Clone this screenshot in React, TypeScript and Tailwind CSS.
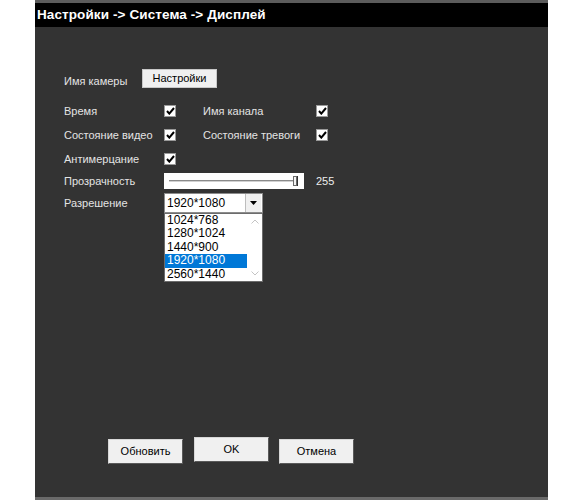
import React from 'react';

const font = { fontFamily: '"Liberation Sans", Arial, sans-serif' };

function Check() {
  return (
    <span className="w-[12px] h-[12px] bg-white border border-[#9a9a9a] flex items-center justify-center shrink-0">
      <svg width="9" height="8" viewBox="0 0 9 8">
        <path d="M1 4 L3.3 6.6 L8 1" stroke="#000" strokeWidth="2" fill="none" />
      </svg>
    </span>
  );
}

function Btn({ label, className = '' }: { label: string; className?: string }) {
  return (
    <button
      className={`w-[75px] h-[25px] bg-[#f0f0f0] text-black text-[11px] border border-t-[#d8d8d8] border-l-[#d8d8d8] border-r-[#5a5a5a] border-b-[#5a5a5a] ${className}`}
    >
      {label}
    </button>
  );
}

const options = ['1024*768', '1280*1024', '1440*900', '1920*1080', '2560*1440'];

export default function App() {
  return (
    <div className="w-[583px] h-[500px] bg-white overflow-hidden" style={font}>
      <div className="ml-[35px] w-[513px] h-[500px] flex flex-col bg-[#333333]">
        <div className="h-[3px] bg-[#5c5c5c]" />
        <div className="h-[24px] bg-black flex items-center pl-[2px]">
          <span className="text-white font-bold text-[13.5px] leading-none tracking-[0.1px]">
            Настройки -&gt; Система -&gt; Дисплей
          </span>
        </div>

        <div className="flex-1 flex flex-col pl-[29px] text-[11px] text-[#e4e4e4]">
          {/* Имя камеры */}
          <div className="mt-[42px] flex items-end h-[19px]">
            <span className="w-[78px] leading-[14px]">Имя камеры</span>
            <button className="w-[75px] h-[19px] bg-[#f0f0f0] text-black text-[11px] border border-[#c8c8c8]">
              Настройки
            </button>
          </div>

          {/* чекбоксы */}
          <div className="mt-[11px] flex items-center h-[24px]">
            <span className="w-[100px]">Время</span>
            <Check />
            <span className="ml-[27px] w-[113px]">Имя канала</span>
            <Check />
          </div>
          <div className="flex items-center h-[24px]">
            <span className="w-[100px]">Состояние видео</span>
            <Check />
            <span className="ml-[27px] w-[113px]">Состояние тревоги</span>
            <Check />
          </div>
          <div className="flex items-center h-[24px]">
            <span className="w-[100px]">Антимерцание</span>
            <Check />
          </div>

          {/* Прозрачность */}
          <div className="mt-[2px] flex items-center h-[16px]">
            <span className="w-[100px]">Прозрачность</span>
            <div className="w-[140px] h-[16px] bg-white flex items-center px-[5px]">
              <svg width="130" height="12" viewBox="0 0 130 12">
                <line x1="0" y1="5.5" x2="127" y2="5.5" stroke="#8a8a8a" strokeWidth="1" />
                <line x1="0" y1="6.5" x2="127" y2="6.5" stroke="#d0d0d0" strokeWidth="1" />
                <rect x="124.5" y="1.5" width="3" height="9" fill="#f4f4f4" stroke="#6a6a6a" strokeWidth="1" />
                <line x1="128.5" y1="1" x2="128.5" y2="11" stroke="#333" strokeWidth="1" />
              </svg>
            </div>
            <span className="ml-[12px] text-[#eeeeee]">255</span>
          </div>

          {/* Разрешение */}
          <div className="mt-[4px] flex items-start">
            <span className="w-[100px] h-[20px] flex items-center">Разрешение</span>
            <div className="relative">
              <div className="w-[99px] h-[20px] bg-white border border-[#8c8c8c] flex items-center text-black text-[12px]">
                <span className="flex-1 pl-[2px]">1920*1080</span>
                <span className="w-[16px] h-[18px] bg-[#f0f0f0] border-l border-[#bdbdbd] flex items-center justify-center mr-[1px]">
                  <svg width="7" height="4" viewBox="0 0 7 4">
                    <path d="M0 0 H7 L3.5 4 Z" fill="#000" />
                  </svg>
                </span>
              </div>
              <div className="absolute left-0 top-full w-[99px] h-[69px] bg-white border border-[#6c6c6c] flex text-black text-[12px]">
                <div className="flex-1 flex flex-col">
                  {options.map(o => (
                    <span
                      key={o}
                      className={`h-[13.4px] leading-[13.4px] pl-[2px] ${o === '1920*1080' ? 'bg-[#0078d7] text-white' : ''}`}
                    >
                      {o}
                    </span>
                  ))}
                </div>
                <div className="w-[15px] flex flex-col items-center justify-between py-[5px]">
                  <svg width="8" height="5" viewBox="0 0 8 5">
                    <path d="M0.5 4.5 L4 1 L7.5 4.5" stroke="#c4c4c4" fill="none" />
                  </svg>
                  <svg width="8" height="5" viewBox="0 0 8 5">
                    <path d="M0.5 0.5 L4 4 L7.5 0.5" stroke="#c4c4c4" fill="none" />
                  </svg>
                </div>
              </div>
            </div>
          </div>

          {/* кнопки */}
          <div className="mt-auto mb-[33px] ml-[44px] flex items-start">
            <Btn label="Обновить" className="mt-[2px]" />
            <Btn label="OK" className="ml-[11px]" />
            <Btn label="Отмена" className="ml-[10px] mt-[2px]" />
          </div>
        </div>
        <div className="h-[3px] bg-[#6a6a6a]" />
      </div>
    </div>
  );
}
